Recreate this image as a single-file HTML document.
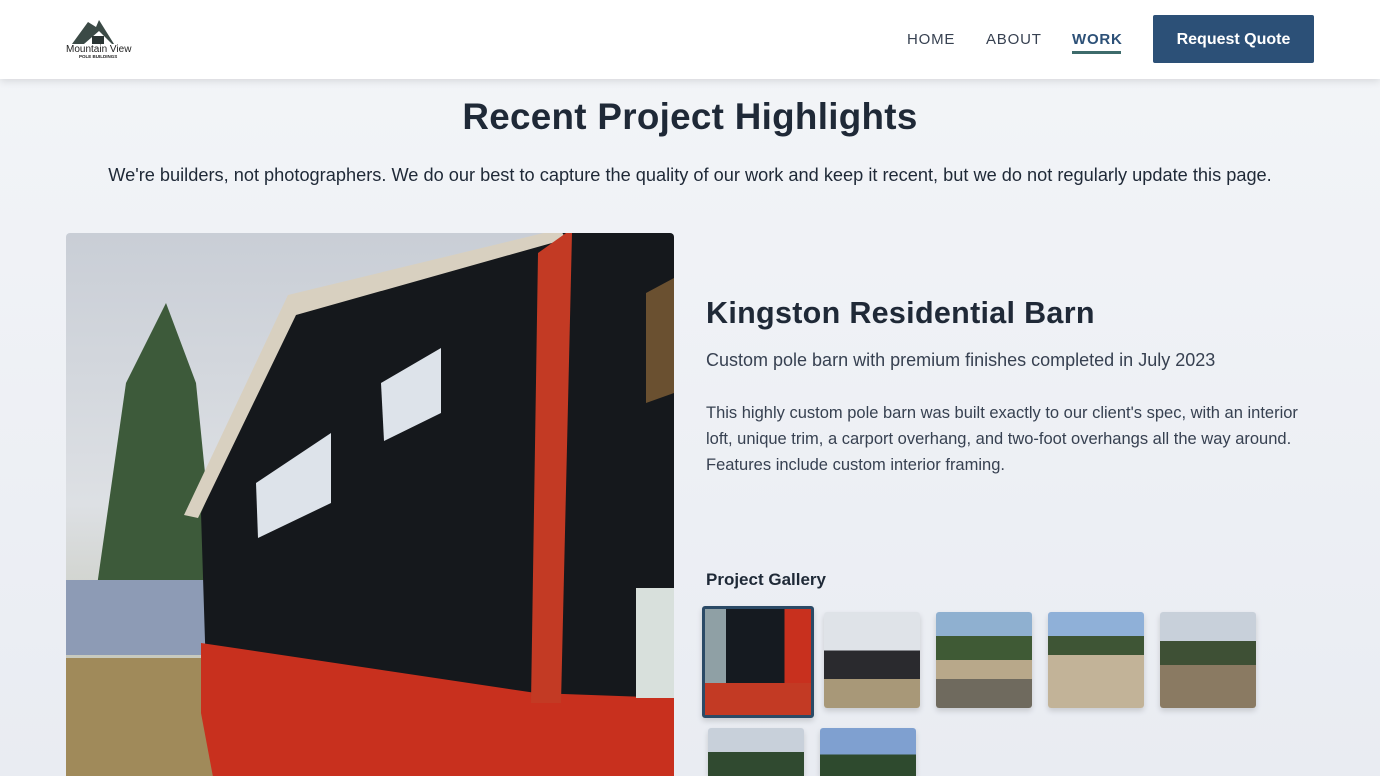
<!DOCTYPE html>
<html><head><style>
*{margin:0;padding:0;box-sizing:border-box}
html{background:#eceff4;height:776px;overflow:hidden}
body{width:1380px;height:776px;overflow:hidden;background:linear-gradient(180deg,#f3f5f8,#e9ecf2);font-family:"Liberation Sans",sans-serif;color:#1f2937;position:relative}
header{position:absolute;left:0;top:0;width:1380px;height:79px;background:#fff;box-shadow:0 2px 8px rgba(0,0,0,.12)}
.nav{position:absolute;top:31px;font-size:15px;letter-spacing:.8px;color:#374151}
.btn{position:absolute;left:1153px;top:15px;width:161px;height:48px;background:#2c5077;color:#fff;font-weight:bold;font-size:16px;display:flex;align-items:center;justify-content:center;border-radius:2px;padding-top:2px}
h1{position:absolute;top:96px;width:1380px;text-align:center;font-size:36.8px;font-weight:bold;color:#1f2937;letter-spacing:.3px}
.sub{position:absolute;top:165px;width:1380px;text-align:center;font-size:18.2px;color:#1f2937}
.main{position:absolute;left:66px;top:233px;width:608px;height:543px;border-radius:4px 4px 0 0;overflow:hidden;background:linear-gradient(180deg,#c9ced6,#dde0e4 50%,#b8b9a0)}
.t{position:absolute;overflow:hidden;border-radius:3px;box-shadow:0 3px 6px rgba(0,0,0,.15)}
</style></head><body>
<header>
<svg style="position:absolute;left:64px;top:17px" width="70" height="44" viewBox="0 0 70 44">
<polygon points="8,27 24,5 32,10 35,3 50,27" fill="#3b4a46"/>
<polygon points="20,27 35,14 48,27" fill="#fff"/>
<rect x="28" y="19" width="12" height="8" fill="#2a3433"/>
<text x="2" y="35" font-size="10" font-family="Liberation Sans" fill="#222">Mountain View</text>
<text x="15" y="41" font-size="4.5" font-weight="bold" font-family="Liberation Sans" fill="#222">POLE BUILDINGS</text>
</svg>
<div class="nav" style="left:907px">HOME</div>
<div class="nav" style="left:986px">ABOUT</div>
<div class="nav" style="left:1072px;font-weight:bold;color:#2c5077">WORK</div>
<div style="position:absolute;left:1072px;top:51px;width:49px;height:3px;background:#3d6b6b"></div>
<div class="btn">Request Quote</div>
</header>
<h1>Recent Project Highlights</h1>
<div class="sub">We're builders, not photographers. We do our best to capture the quality of our work and keep it recent, but we do not regularly update this page.</div>
<div class="main">
<svg width="608" height="543" viewBox="0 0 608 543">
<polygon points="30,360 60,150 100,70 130,150 150,350" fill="#3d5a3a"/>
<rect x="0" y="347" width="150" height="75" fill="#8d9bb5"/>
<rect x="0" y="425" width="608" height="130" fill="#a08a5a"/>
<polygon points="135,280 224,67 494,0 608,0 608,490 470,470 140,440" fill="#15181c"/>
<polygon points="118,282 222,62 494,-4 500,6 230,82 132,285" fill="#d8d0c0"/>
<polygon points="135,410 470,460 608,465 608,560 150,560 135,480" fill="#c8301e"/>
<polygon points="472,20 500,0 506,0 495,470 465,470" fill="#c33a24"/>
<polygon points="315,150 375,115 375,180 318,208" fill="#dde3ea"/>
<polygon points="190,250 265,200 265,270 192,305" fill="#dde3ea"/>
<rect x="570" y="355" width="38" height="110" fill="#d8e0dc"/>
<polygon points="580,60 608,45 608,160 580,170" fill="#6a5030"/>
</svg>
</div>
<div style="position:absolute;left:706px;top:296px;font-size:30.5px;font-weight:bold;letter-spacing:.3px">Kingston Residential Barn</div>
<div style="position:absolute;left:706px;top:350px;font-size:18px;color:#374151">Custom pole barn with premium finishes completed in July 2023</div>
<div style="position:absolute;left:706px;top:400px;width:600px;font-size:16.5px;line-height:26px;color:#374151">This highly custom pole barn was built exactly to our client's spec, with an interior loft, unique trim, a carport overhang, and two-foot overhangs all the way around. Features include custom interior framing.</div>
<div style="position:absolute;left:706px;top:570px;font-size:17px;font-weight:bold">Project Gallery</div>
<div class="t" style="left:702px;top:606px;width:112px;height:112px;border:3px solid #2b4a66;background:linear-gradient(90deg,#8fa0a5 0 20%,#151a20 20% 75%,#c8301e 75%)"><div style="position:absolute;bottom:0;left:0;right:0;height:30%;background:#c33a24"></div></div>
<div class="t" style="left:824px;top:612px;width:96px;height:96px;background:linear-gradient(180deg,#dfe3e8 0 40%,#2a2a2e 40% 70%,#a89878 70%)"></div>
<div class="t" style="left:936px;top:612px;width:96px;height:96px;background:linear-gradient(180deg,#8fb0d0 0 25%,#3f5a35 25% 50%,#b8a88a 50% 70%,#6f6a5e 70%)"></div>
<div class="t" style="left:1048px;top:612px;width:96px;height:96px;background:linear-gradient(180deg,#8fb0d8 0 25%,#3e5535 25% 45%,#c2b398 45%)"></div>
<div class="t" style="left:1160px;top:612px;width:96px;height:96px;background:linear-gradient(180deg,#c8d0da 0 30%,#3e5035 30% 55%,#8a7a62 55%)"></div>
<div class="t" style="left:708px;top:728px;width:96px;height:48px;border-radius:3px 3px 0 0;background:linear-gradient(180deg,#c8d0da 0 50%,#304a30 50%)"></div>
<div class="t" style="left:820px;top:728px;width:96px;height:48px;border-radius:3px 3px 0 0;background:linear-gradient(180deg,#7fa0d0 0 55%,#2e4a2e 55%)"></div>
</body></html>
